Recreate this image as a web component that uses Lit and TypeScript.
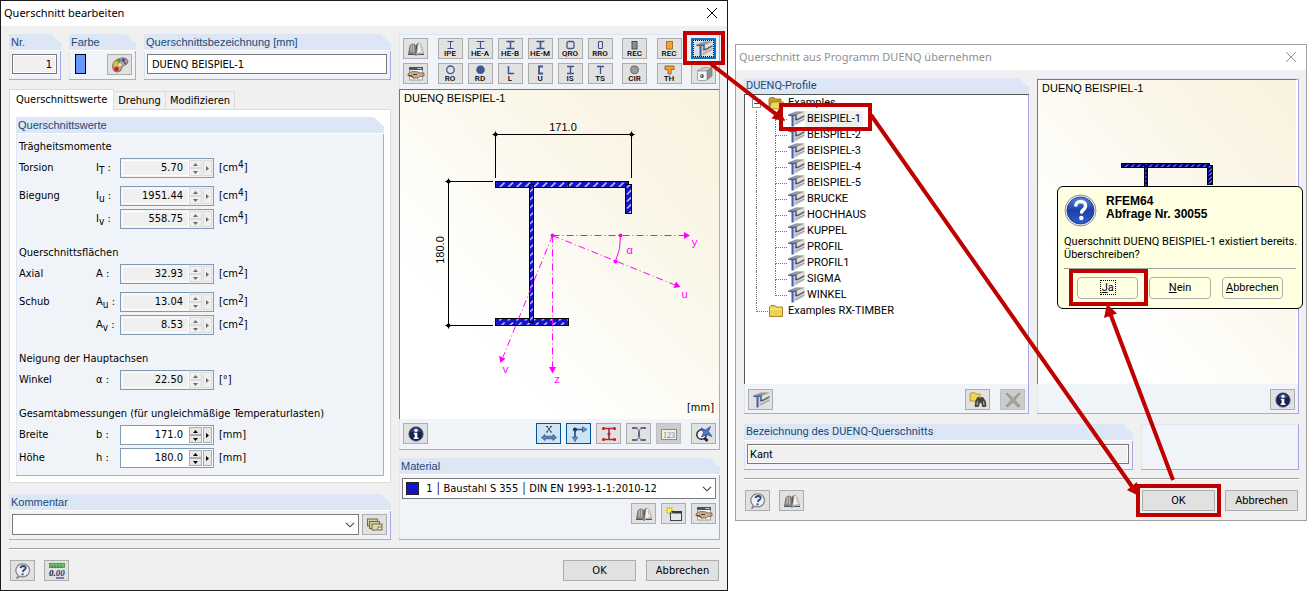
import { LitElement, html, svg, css, TemplateResult } from "lit";
import { customElement } from "lit/decorators.js";
import { classMap } from "lit/directives/class-map.js";

type Field = { id: string; label: string; symbol: TemplateResult; value: string; unit: TemplateResult; editable?: boolean; spaced?: boolean };
type Section = { title: string; fields: Field[] };

const cm4 = html`[cm<sup>4</sup>]`;
const cm2 = html`[cm<sup>2</sup>]`;
const mm = html`[mm]`;

const sections: Section[] = [
  {
    title: "Trägheitsmomente",
    fields: [
      { id: "it", label: "Torsion", symbol: html`I<sub>T</sub> :`, value: "5.70", unit: cm4 },
      { id: "iu", label: "Biegung", symbol: html`I<sub>u</sub> :`, value: "1951.44", unit: cm4, spaced: true },
      { id: "iv", label: "", symbol: html`I<sub>v</sub> :`, value: "558.75", unit: cm4 },
    ],
  },
  {
    title: "Querschnittsflächen",
    fields: [
      { id: "a", label: "Axial", symbol: html`A :`, value: "32.93", unit: cm2 },
      { id: "au", label: "Schub", symbol: html`A<sub>u</sub> :`, value: "13.04", unit: cm2, spaced: true },
      { id: "av", label: "", symbol: html`A<sub>v</sub> :`, value: "8.53", unit: cm2 },
    ],
  },
  {
    title: "Neigung der Hauptachsen",
    fields: [{ id: "alpha", label: "Winkel", symbol: html`α :`, value: "22.50", unit: html`[°]` }],
  },
  {
    title: "Gesamtabmessungen (für ungleichmäßige Temperaturlasten)",
    fields: [
      { id: "b", label: "Breite", symbol: html`b :`, value: "171.0", unit: mm, editable: true },
      { id: "h", label: "Höhe", symbol: html`h :`, value: "180.0", unit: mm, editable: true },
    ],
  },
];

const profiles = ["BEISPIEL-1", "BEISPIEL-2", "BEISPIEL-3", "BEISPIEL-4", "BEISPIEL-5", "BRUCKE", "HOCHHAUS", "KUPPEL", "PROFIL", "PROFIL1", "SIGMA", "WINKEL"];

const icon = (body: unknown, w = 18, h = 16) => html`<svg class="icon" width=${w} height=${h} viewBox="0 0 ${w} ${h}" aria-hidden="true">${body}</svg>`;

const icons = {
  close: icon(svg`<path d="M1 1L11 11M11 1L1 11" fill="none" stroke="currentColor"/>`, 12, 12),
  book: icon(svg`
    <path d="M1.500 12.500L3 4.500Q5 2 8 3.500L9 13.500Q5 11.500 1.500 12.500Z" fill="#8f8a84" stroke="#55514d" stroke-width=".6"/>
    <path d="M4.500 4L4 11M6.500 3.500L6.500 11.500" stroke="#bdb8b1" fill="none" stroke-width="1.200"/>
    <path d="M9 13.500L8.500 4.500L11 2L11.500 11Z" fill="#5b5753"/>
    <path d="M9.500 13L11 2.500Q13 2 14 3.500L16.500 12Q12.500 11 9.500 13Z" fill="#f7f5f0" stroke="#8b867f" stroke-width=".6"/>
    <path d="M13 4.500L14.500 10.500" stroke="#c9c4bc" fill="none"/>
    <path d="M1 13Q6 12 9 14Q12 12.200 17 12.800V14H10L9 15L8 14H1Z" fill="#4a5170"/>`),
  form: icon(svg`
    <rect x="2.500" y="1.500" width="13" height="12.500" fill="#f0f2f4" stroke="#9aa2aa"/>
    <rect x="2" y="1" width="14" height="3" fill="#4b5563"/>
    <path d="M10.500 2.500H14.500" stroke="#c3cad3"/>
    <path d="M1 8L3.500 6L7 5.500L11 6L13.500 7H17V10L13 10.500L11.500 12H6L5 10.500L1 9.500Z" fill="#d3ad8b" stroke="#5a4433" stroke-width=".7"/>
    <path d="M1.500 9.500L5 10L6.500 11.500M6 8.500H10" stroke="#3b2a1f" fill="none" stroke-width=".9"/>`),
  profile: icon(svg`
    <path d="M1 3.500L9 .5H17.500V9.500L6 15.500V7L1 4.500Z" fill="#cfcfcf"/>
    <path d="M1 3.500L9 .5H17.500L9.500 4Z" fill="#9a9a9a"/>
    <path d="M8 5L17 1.800V3.500L9.500 7.500Z" fill="#e2e2e2"/>
    <path d="M8 8.500H10.500L17.500 4.800" fill="none" stroke="#555" stroke-width="1.300"/>
    <path d="M8 12.800L17.500 8" fill="none" stroke="#9a9a9a" stroke-width=".9"/>
    <path d="M1.500 4.200H9V8" fill="none" stroke="#4560a8" stroke-width="1.600"/>
    <path d="M5.500 4V15.500" fill="none" stroke="#4560a8" stroke-width="2"/>`),
  box: icon(svg`
    <path d="M2 5L8 1.500H17L12 5Z" fill="#c9c9c9" stroke="#8a8a8a" stroke-width=".6"/>
    <path d="M12 5L17 1.500V10L12 14Z" fill="#8d8d8d" stroke="#777" stroke-width=".6"/>
    <rect x="2.500" y="5" width="9.500" height="9.500" rx="1.500" fill="#f6f6f6" stroke="#8a8a8a" stroke-width=".7"/>
    <circle cx="7" cy="10" r="1.900" fill="#555"/><circle cx="6.500" cy="9.500" r=".8" fill="#ddd"/>`),
  palette: icon(svg`
    <path d="M2 12Q0 5 7 2Q15 -1 17 4Q17.500 7 13 8.500Q10 10 10.500 12Q10 15 6 15Q3 15 2 12Z" fill="#b9a58a" stroke="#6d5c48" stroke-width=".8"/>
    <circle cx="4.500" cy="7" r="2" fill="#e8c516"/><circle cx="8" cy="3.800" r="1.800" fill="#2fa52f"/>
    <circle cx="12.500" cy="3.200" r="1.800" fill="#2b50d8"/><circle cx="5.500" cy="12" r="2.300" fill="#d42020"/>
    <circle cx="9" cy="8" r="1.400" fill="#f2ead9"/><circle cx="14" cy="6" r="1" fill="#7a3d9a"/>`),
  info: icon(svg`
    <circle cx="9" cy="8" r="7.200" fill="#16234f" stroke="#5c6584" stroke-width=".8"/>
    <path d="M4 5Q9 -1 14 5Q9 7 4 5Z" fill="#44568f"/>
    <circle cx="9" cy="4.300" r="1.600" fill="#fff"/>
    <path d="M6.800 6.800H10.300V11.500H11.500V13H6.600V11.500H7.700V8.200H6.800Z" fill="#fff"/>`),
  dims: icon(svg`
    <path d="M7 .5L11 6M11 .5L7 6M6 .5H8M10 .5H12M6 6H8M10 6H12" stroke="#222" fill="none" stroke-width=".8"/>
    <path d="M1.500 11.500L5 8.500V10.200H13V8.500L16.500 11.500L13 14.500V12.800H5V14.500Z" fill="#5a83bd" stroke="#28467c" stroke-width=".7"/>`),
  axes: icon(svg`
    <path d="M5 13V3.500H13" fill="none" stroke="#2f4f8f" stroke-width="1.700"/>
    <circle cx="5" cy="3.500" r="2.100" fill="#20345f"/>
    <path d="M12.500 .8L17 3.500L12.500 6.200ZM2.300 11L5 15.700L7.700 11Z" fill="#6a93cc" stroke="#28467c" stroke-width=".6"/>`),
  points: icon(svg`
    <path d="M9 2.500V13.500" stroke="#3a3f66" fill="none" stroke-width="1.500"/>
    <path d="M2 2.500H16M2 13.500H16" stroke="#c2202c" fill="none" stroke-width="1.300"/>
    <g fill="#d8141c"><circle cx="3.500" cy="2.500" r="1.500"/><circle cx="14.500" cy="2.500" r="1.500"/><circle cx="9" cy="8" r="1.600"/><circle cx="3.500" cy="13.500" r="1.500"/><circle cx="14.500" cy="13.500" r="1.500"/></g>`),
  beam: icon(svg`<path d="M2 2H7.500M10.500 2H16M2 14H7.500M10.500 14H16M9 4.500V11.500" stroke="#33406f" stroke-width="1.500" fill="none"/><path d="M7 3.500H11M7 12.500H11" stroke="#8a92b3"/>`),
  numbers: icon(svg`<rect x="1.500" y="3.500" width="15" height="10" fill="#efefe6" stroke="#8d8d86"/><text x="9" y="11.500" text-anchor="middle" font-family="Liberation Serif" font-size="8" fill="#777">123</text>`),
  zoom: icon(svg`
    <circle cx="6.500" cy="8.500" r="4.700" fill="#f2f4f6" stroke="#20252e" stroke-width="1.400"/>
    <path d="M9.500 12L12.500 15" stroke="#20252e" stroke-width="2.800"/>
    <path d="M6 2L10.500 4L15.500 .5L13.500 5.500L17 10.500L11.500 8.500L6.500 11L8.500 6.500Z" fill="#4b78cc" stroke="#24468e" stroke-width=".7"/>`),
  help: icon(svg`
    <path d="M9 .8A6.700 6.500 0 1 1 6 13.200L3 15.300L4 12A6.700 6.500 0 0 1 9 .8Z" fill="#eef0f4" stroke="#80858e" stroke-width="1.300"/>
    <path d="M6.500 5Q7 3 9.300 3Q12 3.200 11.600 5.200Q11.300 6.400 9.500 7.300L9 9" fill="none" stroke="#34477f" stroke-width="1.900"/>
    <circle cx="8.600" cy="11.300" r="1.100" fill="#34477f"/>`),
  units: icon(svg`
    <rect x="1.500" y=".5" width="15" height="4" fill="#6cc069" stroke="#3e8f45" stroke-width=".8"/>
    <path d="M4 2.500V4.500M7 2.500V4.500M10 2.500V4.500M13 2.500V4.500" stroke="#24662b"/>
    <text x="1" y="13" font-family="Liberation Serif" font-size="9" font-style="italic" font-weight="bold" fill="#111">0.<tspan fill="#24407e">00</tspan></text>
    <path d="M8 15H16" stroke="#24407e" stroke-width="1.200"/>`),
  cards: icon(svg`
    <rect x="1.500" y="2" width="10" height="7" fill="#d8d0a4" stroke="#6f6a4e"/>
    <rect x="3.500" y="4.500" width="10" height="7" fill="#d8d0a4" stroke="#6f6a4e"/>
    <rect x="6" y="7" width="10" height="6" fill="#e0d8ae" stroke="#6f6a4e"/>
    <path d="M12 13V10H16" fill="#fff" stroke="#6f6a4e"/>`),
  add: icon(svg`
    <rect x="5.500" y="5.500" width="11" height="9" fill="#e4e9ef" stroke="#3c4452"/>
    <rect x="5" y="5" width="12" height="2.500" fill="#323a4c"/>
    <path d="M4.500 .5V8.500M.5 4.500H8.500M1.700 1.700L7.300 7.300M7.300 1.700L1.700 7.300" stroke="#d9b400" stroke-width="1.200"/>
    <circle cx="4.500" cy="4.500" r="1.900" fill="#fff04a"/>`),
  search: icon(svg`
    <path d="M1 2L2 .8H6L7 2H11V9H1Z" fill="#f0d455" stroke="#a8861a" stroke-width=".8"/>
    <path d="M6 14.500L6.500 9.500L8.500 5.500H10.500L11.300 8.500L12 5.500H14L16.500 9.500L17 14.500H13.500L12.500 10.500H10.500L9.500 14.500Z" fill="#4a4845" stroke="#262524" stroke-width=".6"/>
    <path d="M8 13L8.500 9.500M15 13L14.500 9.500" stroke="#b8b3ac" stroke-width="1.100"/>`),
  remove: icon(svg`<path d="M2 1.500L4 1.500L9 6.500L15 1L16 1.500L10.800 8L16 14L14 15L9 9.800L3.500 15L2 14L7.300 8Z" fill="#a3a79f" stroke="#80847c" stroke-width=".7"/>`),
  folderOpen: icon(svg`<path d="M1 3L2.500 1.500H6L7 3H13V12.500H1Z" fill="#c59d24" stroke="#8a6c12" stroke-width=".8"/><path d="M3.500 6H15.500L13 13H1.200Z" fill="#f0d75e" stroke="#97781a" stroke-width=".8"/>`, 16, 14),
  folder: icon(svg`<path d="M1.500 3L3 1.500H7L8 3H14.500V12.500H1.500Z" fill="#eed251" stroke="#9a7c1c" stroke-width=".9"/><path d="M2 5H14" stroke="#fbf0a8"/>`, 16, 14),
  chevron: html`<svg class="chevron" width="10" height="6" viewBox="0 0 10 6" aria-hidden="true"><path d="M1 .8L5 4.800L9 .8" fill="none" stroke="#444" stroke-width="1.100"/></svg>`,
};

const blue = "#3f5592";
const iShape = (half: number, weight: number) => svg`<path d="M${11.5 - half} 2.500H${11.5 + half}M${11.5 - half} 9.500H${11.5 + half}M11.500 2.500V9.500" fill="none" stroke=${blue} stroke-width=${weight}/>`;
const shapes: Record<string, unknown> = {
  IPE: iShape(3, 1),
  "HE-A": iShape(4, 1.2),
  "HE-B": iShape(4, 1.5),
  "HE-M": iShape(4, 1.7),
  QRO: svg`<rect x="8" y="2.500" width="7" height="7" rx="1.500" fill="none" stroke=${blue} stroke-width="1.300"/>`,
  RRO: svg`<rect x="9.500" y="2.500" width="4" height="7" rx=".8" fill="none" stroke=${blue} stroke-width="1.100"/>`,
  REC: svg`<rect x="9" y="2.500" width="5" height="7.500" fill="#8f8f8f" stroke="#444e66"/>`,
  "REC ": svg`<rect x="8.500" y="2.500" width="6" height="7.500" fill="#f9a12e" stroke="#a8742c"/>`,
  RO: svg`<circle cx="11.500" cy="5.800" r="3.800" fill="none" stroke=${blue} stroke-width="1.300"/>`,
  RD: svg`<circle cx="11.500" cy="5.800" r="4.300" fill=${blue}/>`,
  L: svg`<path d="M9.500 2V9.500H15" fill="none" stroke=${blue} stroke-width="1.500"/>`,
  U: svg`<path d="M14 2.500H10V9.500H14" fill="none" stroke=${blue} stroke-width="1.800"/>`,
  IS: iShape(3.5, 1.5),
  TS: svg`<path d="M8 2.500H15M11.500 2.500V10" fill="none" stroke=${blue} stroke-width="1.300"/>`,
  CIR: svg`<circle cx="11.500" cy="5.800" r="4" fill="#9b9b9b" stroke="#6a6a6a"/>`,
  TH: svg`<path d="M7 2H16V5.500H13V10H10V5.500H7Z" fill="#f9a12e" stroke="#8a5f22" stroke-width=".9"/>`,
};

@customElement("app-root")
export class AppRoot extends LitElement {
  static styles = css`
    :host {
      display: block;
      background: #fff;
      color: #000;
      font: 11px/16px "DejaVu Sans Condensed", "DejaVu Sans", sans-serif;
      --line: #a6a6ee;
      --head: #dce6f5;
      --fill: #f0f4f9;
    }
    * { box-sizing: border-box; }
    button, input, select { font: inherit; color: inherit; margin: 0; padding: 0; border-radius: 0; }
    button { appearance: none; }
    svg { display: block; flex: none; }
    sub, sup { font-size: 10px; line-height: 0; }
    sub { vertical-align: -3px; }
    sup { vertical-align: 3px; }

    .desktop {
      position: relative;
      display: grid;
      grid-template-columns: minmax(0, 728fr) minmax(0, 572fr);
      column-gap: 7px;
      padding-right: 7px;
      align-items: start;
    }
    .window { background: #f0f0f0; border: 1px solid #1b1b1b; min-width: 0; }
    .window.second { position: relative; margin-top: 44px; border-color: #a0a0a0; font-family: Roboto, sans-serif; }
    .titlebar {
      display: flex; align-items: center; justify-content: space-between;
      height: 25px; padding: 0 9px 2px 3px; background: #fff;
      font-family: "Noto Sans", sans-serif;
    }
    .titlebar h1 { margin: 0; font: inherit; }
    .titlebar button { border: 0; background: none; }
    .second .titlebar { color: #8f8f8f; }
    .content { padding: 8px 7px 9px 8px; }
    .columns { display: grid; gap: 8px; }
    .main-cols { grid-template-columns: minmax(0, 382fr) minmax(0, 321fr); }
    .duenq-cols { grid-template-columns: minmax(0, 285fr) minmax(0, 262fr); }
    .name-cols { grid-template-columns: minmax(0, 390fr) minmax(0, 158fr); margin-top: 10px; }
    .left { display: flex; flex-direction: column; }
    .right { display: grid; grid-template-rows: 1fr auto; gap: 8px; }
    .top { display: grid; grid-template-columns: 52px 67px minmax(0, 1fr); gap: 8px; }

    .group {
      display: flex; flex-direction: column; min-width: 0; min-height: 46px;
      background: var(--fill);
      border: solid var(--line); border-width: 0 1px 1px 0;
      box-shadow: inset 1px 0 var(--head);
    }
    .group.cut { clip-path: polygon(0 0, calc(100% - 10px) 0, 100% 10px, 100% 100%, 0 100%); }
    .group.plain { border-top: 1px solid var(--head); }
    .group h2 {
      margin: 0 -1px 0 0; height: 17px; padding-left: 2px; white-space: nowrap;
      font: 11px/16px "Liberation Sans", Arial, sans-serif; color: #1b4a75;
      background: var(--head); border-bottom: 1px solid #fff;
    }
    .second .group h2 { font-family: Roboto, sans-serif; }
    .row { display: flex; gap: 3px; padding: 3px 3px 4px; align-items: flex-start; }

    .text { width: 100%; min-width: 0; height: 20px; padding: 0 4px; border: 1px solid #7a7a7a; background: #fff; }
    .text[readonly] { background: #f0f0f0; box-shadow: inset 0 0 0 1px #fff; }
    .second .text[readonly] { padding: 0 2px; }
    .text.number { text-align: right; }
    .swatch { display: block; flex: none; width: 11px; height: 20px; border: 1px solid #000; background: #6699ff; }
    .color-row { justify-content: space-between; padding-left: 6px; }

    .btn { display: flex; align-items: center; justify-content: center; height: 21px; border: 1px solid #adadad; background: #e1e1e1; }
    .btn.square { width: 25px; flex: none; }
    .btn.wide { width: 73px; margin-left: 1px; }
    .btn.on { background: #cce4f7; border-color: #005499; }
    .btn:disabled { background: #ccc; border-color: #bfbfbf; }
    .btn.focus { border: 2px solid #0078d7; outline: 1px dotted #000; outline-offset: -3px; }
    .btn.shape { flex-direction: column; justify-content: flex-start; }
    .btn.shape span { font: 500 8px/8px Roboto, sans-serif; color: #000; }

    .tabs { display: flex; align-items: flex-end; margin-top: 9px; height: 20px; }
    .tabs button { height: 18px; padding: 0 4px; background: #f0f0f0; border: 1px solid #dcdcdc; border-width: 1px 1px 0 0; white-space: nowrap; }
    .tabs button[aria-selected="true"] { height: 21px; margin-bottom: -1px; padding: 0 6px; background: #fff; border-left-width: 1px; position: relative; }
    .panel { flex: 1; display: grid; padding: 7px 6px 6px; background: #fff; border: 1px solid #dcdcdc; }
    .fields { display: flex; flex-direction: column; gap: 16px; padding: 5px 2px 7px 3px; }
    .fields section { display: flex; flex-direction: column; gap: 3px; }
    .fields h3 { margin: 0; font: inherit; white-space: nowrap; }
    .field { display: grid; grid-template-columns: 101px 94px 1fr; align-items: center; }
    .field.spaced { margin-top: 5px; }
    .field label { display: grid; grid-template-columns: 77px 24px; white-space: nowrap; }
    .field .unit { padding-left: 5px; white-space: nowrap; }
    .spin { display: flex; height: 20px; padding: 1px; background: #f0f0f0; border: 1px solid #7f9db9; color: #000; }
    .spin input { flex: 1; min-width: 0; padding: 0 5px; border: 1px solid #fff; background: transparent; text-align: right; }
    .spin .steps { display: grid; width: 13px; margin-right: 1px; }
    .spin button { display: grid; place-items: center; min-height: 0; border: 1px solid #dcdcdc; background: #f0f0f0; color: #6d6d6d; }
    .spin .side { width: 9px; }
    .spin.editable { background: #fff; }
    .spin.editable button { border-color: #adadad; background: #e8e8e8; color: #000; }
    .comment { margin-top: 11px; }

    .combo { display: grid; flex: 1; min-width: 0; height: 21px; align-items: center; background: #fff; border: 1px solid #7a7a7a; }
    .combo > * { grid-row: 1; }
    .combo select { grid-column: 1 / 3; height: 19px; width: 100%; appearance: none; border: 0; background: transparent; }
    .combo .chevron { grid-column: 2; justify-self: end; margin-right: 3px; pointer-events: none; }
    .combo.material { flex: none; grid-template-columns: 20px minmax(0, 1fr); }
    .combo.material select { grid-column: 2; }
    .chip { width: 13px; height: 13px; margin-left: 3px; background: #1414cd; border: 1px solid #222; }
    .material-body { display: flex; flex-direction: column; gap: 4px; padding: 3px 3px 15px; }
    .actions { display: flex; justify-content: flex-end; gap: 5px; }

    .toolbox { display: flex; flex-direction: column; gap: 4px; padding: 3px 3px 5px 4px; }
    .tools { display: flex; justify-content: space-between; }
    .tools div { display: flex; gap: 5px; }
    .canvas {
      flex: 1; display: flex; flex-direction: column; min-height: 0;
      border: solid #777; border-width: 1px 0 0 1px;
      background: linear-gradient(to top right, #fff 25%, #faf7e9 68%, #fbf3e3 84%, #f7f4de);
      font: 11px/16px "Liberation Sans", Arial, sans-serif;
    }
    .second .canvas { border-right: 2px solid #fff; }
    .canvas p { margin: 0; padding-left: 4px; }
    .canvas .unit { align-self: flex-end; padding: 0 5px 3px 0; font-family: "DejaVu Sans Condensed", sans-serif; }
    .canvas svg { width: 100%; flex: 1; min-height: 0; }
    .viewbar { display: flex; gap: 5px; padding: 4px 3px 5px 4px; }
    .second .viewbar { padding: 5px 3px 3px 4px; }
    .viewbar .push { margin-right: auto; }
    .viewbar .gap { margin-left: 5px; }

    .rule { height: 2px; margin-top: 8px; background: #a0a0a0; border-bottom: 1px solid #fff; }
    .footer { display: flex; gap: 9px; margin: 10px 1px 0; }
    .footer .push { margin-right: auto; }

    .tree { flex: 1; margin: 0; padding: 0 0 0 7px; list-style: none; background: #fff; border: solid #555; border-width: 0 0 0 1px; }
    .profiles h2 { border-bottom-color: #555; }
    .tree ul { margin: 0; padding: 0; list-style: none; }
    .node { display: flex; align-items: center; height: 16px; }
    .node .name { padding: 0 2px; margin-left: 2px; }
    .node .trunk ~ .name { margin-left: 0; }
    .node.selected .name { background: #f0f0f0; }
    .toggle { display: grid; place-items: center; width: 9px; height: 9px; margin-right: 7px; border: 1px solid #919191; background: #fff; }
    .trunk { width: 19px; height: 16px; margin-left: 4px; border-left: 1px dotted #777; }
    .branch { display: flex; flex-direction: column; width: 12px; height: 16px; }
    .branch::before { content: ""; height: 9px; border: dotted #777; border-width: 0 0 1px 1px; }
    .branch::after { content: ""; height: 7px; border-left: 1px dotted #777; }
    .branch.end::after { border: 0; }
    .branch.root { margin-left: 4px; }

    .query {
      position: absolute; top: 141px; right: 3px; width: 246px; padding: 7px 6px 9px;
      background: #ffffe1; border: 1px solid #000; border-radius: 6px;
    }
    .query header { display: flex; gap: 9px; align-items: center; font: bold 12px/13px "Liberation Sans", Arial, sans-serif; }
    .query p { margin: 8px 0 7px; line-height: 13px; white-space: nowrap; }
    .query header p { margin: 0 0 6px; line-height: 13px; }
    .query .rule { margin: 0; }
    .answers { display: flex; gap: 11px; padding: 7px 13px 0; }
    .answers button { flex: 1; height: 22px; border: 1px solid #adadad; border-radius: 4px; background: transparent; }
    .answers span { display: inline-block; padding: 0 1px; line-height: 13px; }
    .answers .default span { outline: 1px dotted #000; }

    .notes { position: absolute; inset: 0; width: 100%; height: 100%; pointer-events: none; }
  `;

  private square(label: string, glyph: unknown, cls = "", disabled = false) {
    return html`<button class="btn square ${cls}" aria-label=${label} ?disabled=${disabled}>${glyph}</button>`;
  }

  private shape(name: string) {
    return html`<button class="btn square shape">
      <svg width="23" height="11" viewBox="0 0 23 11" aria-hidden="true">${shapes[name]}</svg><span>${name.trim()}</span>
    </button>`;
  }

  private field(f: Field) {
    return html`<div class=${classMap({ field: true, spaced: !!f.spaced })}>
      <label for=${f.id}><span>${f.label}</span><span>${f.symbol}</span></label>
      <div class=${classMap({ spin: true, editable: !!f.editable })}>
        <input id=${f.id} .value=${f.value} ?readonly=${!f.editable} />
        <div class="steps">
          <button aria-label="Mehr"><svg width="5" height="3" viewBox="0 0 5 3"><path d="M0 3L2.500 0L5 3Z" fill="currentColor"/></svg></button>
          <button aria-label="Weniger"><svg width="5" height="3" viewBox="0 0 5 3"><path d="M0 0L2.500 3L5 0Z" fill="currentColor"/></svg></button>
        </div>
        <button class="side" aria-label="Auswahl"><svg width="3" height="5" viewBox="0 0 3 5"><path d="M0 0L3 2.500L0 5Z" fill="currentColor"/></svg></button>
      </div>
      <span class="unit">${f.unit}</span>
    </div>`;
  }

  private drawing() {
    const tick = (x: number, y: number) => svg`<path d="M${x - 3} ${y}H${x + 3}M${x} ${y - 3}V${y + 3}" stroke="#000"/><circle cx=${x} cy=${y} r="2" fill="#000"/>`;
    return html`<svg viewBox="400 106 319 294" role="img" aria-label="Querschnitt mit Bemaßung">
      <defs>
        <pattern id="hatch" width="8.500" height="7" patternUnits="userSpaceOnUse" x="498" y="181">
          <rect width="8.500" height="7" fill="#1414cd"/><path d="M1.500 6.500L6.500 1.500" stroke="#dcdcfa" stroke-width="1.300"/>
        </pattern>
        <pattern id="hatchWeb" width="4" height="8" patternUnits="userSpaceOnUse" x="529.500" y="186">
          <rect width="4" height="8" fill="#1414cd"/><path d="M.5 6L4 2.500" stroke="#dcdcfa" stroke-width="1.200"/>
        </pattern>
      </defs>
      <path d="M495.500 134.500H631.500M495.500 134.500V178M631.500 134.500V178M448.500 181.500V325.500M448.500 181.500H493M448.500 325.500H493" fill="none" stroke="#000"/>
      ${tick(495.5, 134.5)}${tick(631.5, 134.5)}${tick(448.5, 181.5)}${tick(448.5, 325.5)}
      <text x="563" y="131" text-anchor="middle" font-size="11">171.0</text>
      <text transform="translate(444 250) rotate(-90)" text-anchor="middle" font-size="11">180.0</text>
      <g stroke="#000">
        <rect x="495.500" y="181.500" width="133" height="6" fill="url(#hatch)"/>
        <path d="M568.500 181.500V187.500"/>
        <rect x="495.500" y="318.500" width="73" height="7" fill="url(#hatch)"/>
        <rect x="529.500" y="184.500" width="4" height="138" fill="url(#hatchWeb)"/>
        <rect x="625.500" y="184.500" width="6" height="29" fill="url(#hatch)"/>
      </g>
      <g stroke="#f0f" fill="none">
        <path d="M552.500 235.500H684M552.500 235.500V367M552.500 235.500L675 285M552.500 235.500L503 357" stroke-dasharray="7 3 1 3"/>
        <path d="M620.500 235.500Q621 249 615.500 261.500"/>
      </g>
      <g fill="#f0f">
        <circle cx="552.500" cy="235.500" r="2"/><circle cx="620.500" cy="235.500" r="2"/><circle cx="615.500" cy="261.500" r="2"/>
        <path d="M684 232L690 235.500L684 239ZM549 367L552.500 373.500L556 367ZM680.500 287L673.500 288L676 281.500ZM500.500 363L499 356L505.500 358.500Z"/>
        <g font-family="Liberation Mono" font-size="11" text-anchor="middle">
          <text x="694.500" y="246">y</text><text x="629.500" y="254">α</text><text x="684.500" y="298">u</text><text x="505.500" y="373">v</text><text x="557" y="383">z</text>
        </g>
      </g>
    </svg>`;
  }

  private preview() {
    return html`<svg viewBox="1038 96 258 288" role="img" aria-label="Vorschau des Profils">
      <defs>
        <pattern id="mini" width="6" height="4" patternUnits="userSpaceOnUse" x="1124" y="164">
          <rect width="6" height="4" fill="#000082"/><path d="M1 3.500L4 .5" stroke="#c9c9f7"/>
        </pattern>
      </defs>
      <g fill="url(#mini)" stroke="#000">
        <rect x="1121.500" y="163.500" width="88" height="4"/>
        <rect x="1121.500" y="254.500" width="48" height="5"/>
        <rect x="1144.500" y="165.500" width="3" height="91"/>
        <rect x="1207.500" y="165.500" width="5" height="19"/>
      </g>
    </svg>`;
  }

  private editor() {
    return html`<main class="window">
      <div class="titlebar"><h1>Querschnitt bearbeiten</h1><button aria-label="Schließen">${icons.close}</button></div>
      <div class="content">
        <div class="columns main-cols">
          <div class="left">
            <div class="top">
              <div class="group cut"><h2><label for="nr">Nr.</label></h2><div class="row"><input id="nr" class="text number" readonly value="1" /></div></div>
              <div class="group cut"><h2>Farbe</h2><div class="row color-row"><span class="swatch"></span>${this.square("Farbe wählen", icons.palette)}</div></div>
              <div class="group cut"><h2><label for="name">Querschnittsbezeichnung [mm]</label></h2><div class="row"><input id="name" class="text" value="DUENQ BEISPIEL-1" /></div></div>
            </div>
            <div class="tabs" role="tablist">
              <button role="tab" aria-selected="true">Querschnittswerte</button>
              <button role="tab" aria-selected="false">Drehung</button>
              <button role="tab" aria-selected="false">Modifizieren</button>
            </div>
            <div class="panel" role="tabpanel">
              <div class="group cut">
                <h2>Querschnittswerte</h2>
                <div class="fields">${sections.map((s) => html`<section><h3>${s.title}</h3>${s.fields.map((f) => this.field(f))}</section>`)}</div>
              </div>
            </div>
            <div class="group cut comment">
              <h2><label for="comment">Kommentar</label></h2>
              <div class="row"><div class="combo"><select id="comment"><option></option></select>${icons.chevron}</div>${this.square("Kommentare", icons.cards)}</div>
            </div>
          </div>
          <div class="right">
            <div class="group plain">
              <div class="toolbox">
                <div class="tools">
                  ${this.square("Bibliothek", icons.book)}
                  <div>${["IPE", "HE-A", "HE-B", "HE-M", "QRO", "RRO"].map((n) => this.shape(n))}</div>
                  ${this.shape("REC")}${this.shape("REC ")}${this.square("DUENQ", icons.profile, "focus")}
                </div>
                <div class="tools">
                  ${this.square("Bearbeiten", icons.form)}
                  <div>${["RO", "RD", "L", "U", "IS", "TS"].map((n) => this.shape(n))}</div>
                  ${this.shape("CIR")}${this.shape("TH")}${this.square("Hohlprofil", icons.box)}
                </div>
              </div>
              <div class="canvas"><p>DUENQ BEISPIEL-1</p>${this.drawing()}<p class="unit">[mm]</p></div>
              <div class="viewbar">
                ${this.square("Info", icons.info, "push")}${this.square("Bemaßung", icons.dims, "on")}${this.square("Achsen", icons.axes, "on")}
                ${this.square("Spannungspunkte", icons.points)}${this.square("Umriss", icons.beam)}${this.square("Nummerierung", icons.numbers, "", true)}
                ${this.square("Zoom zurücksetzen", icons.zoom, "gap")}
              </div>
            </div>
            <div class="group cut">
              <h2><label for="material">Material</label></h2>
              <div class="material-body">
                <div class="combo material">
                  <span class="chip"></span>
                  <select id="material"><option>&nbsp;1&nbsp;│&thinsp;Baustahl S 355&nbsp;│&thinsp;DIN EN 1993-1-1:2010-12</option></select>
                  ${icons.chevron}
                </div>
                <div class="actions">${this.square("Bibliothek", icons.book)}${this.square("Neu", icons.add)}${this.square("Bearbeiten", icons.form)}</div>
              </div>
            </div>
          </div>
        </div>
        <div class="rule"></div>
        <div class="footer">${this.square("Hilfe", icons.help)}${this.square("Einheiten", icons.units, "push")}<button class="btn wide">OK</button><button class="btn wide">Abbrechen</button></div>
      </div>
    </main>`;
  }

  private importer() {
    return html`<section class="window second">
      <div class="titlebar"><h1>Querschnitt aus Programm DUENQ übernehmen</h1><button aria-label="Schließen">${icons.close}</button></div>
      <div class="content">
        <div class="columns duenq-cols">
          <div class="group cut profiles">
            <h2>DUENQ-Profile</h2>
            <ul class="tree" role="tree">
              <li role="treeitem" aria-expanded="true">
                <div class="node"><span class="toggle"><svg width="5" height="1" viewBox="0 0 5 1"><path d="M0 .5H5" stroke="#3b4a80"/></svg></span>${icons.folderOpen}<span class="name">Examples</span></div>
                <ul role="group">
                  ${profiles.map((name, i) => html`<li role="treeitem" aria-selected=${i === 0} class=${classMap({ node: true, selected: i === 0 })}>
                    <span class="trunk"></span><span class=${classMap({ branch: true, end: i === profiles.length - 1 })}></span>${icons.profile}<span class="name">${name}</span>
                  </li>`)}
                </ul>
              </li>
              <li role="treeitem" class="node"><span class="branch root end"></span>${icons.folder}<span class="name">Examples RX-TIMBER</span></li>
            </ul>
            <div class="viewbar">${this.square("Profil", icons.profile, "push")}${this.square("Suchen", icons.search)}${this.square("Löschen", icons.remove, "gap", true)}</div>
          </div>
          <div class="group plain">
            <div class="canvas"><p>DUENQ BEISPIEL-1</p>${this.preview()}</div>
            <div class="viewbar"><span class="push"></span>${this.square("Info", icons.info)}</div>
          </div>
        </div>
        <div class="columns name-cols">
          <div class="group cut"><h2><label for="duenq">Bezeichnung des DUENQ-Querschnitts</label></h2><div class="row"><input id="duenq" class="text" readonly value="Kant" /></div></div>
          <div class="group plain"></div>
        </div>
        <div class="rule"></div>
        <div class="footer">${this.square("Hilfe", icons.help)}${this.square("Bibliothek", icons.book, "push")}<button class="btn wide">OK</button><button class="btn wide">Abbrechen</button></div>
      </div>
      ${this.query()}
    </section>`;
  }

  private query() {
    return html`<div class="query" role="alertdialog" aria-label="RFEM64">
      <header>
        <svg width="33" height="33" viewBox="0 0 33 33" aria-hidden="true">
          <defs><linearGradient id="ball" x1="0" y1="0" x2="0" y2="1"><stop offset="0" stop-color="#5b86d8"/><stop offset=".5" stop-color="#1c3fa8"/><stop offset="1" stop-color="#2a5fd0"/></linearGradient></defs>
          <circle cx="16.500" cy="16.500" r="15.500" fill="#e6e9ef" stroke="#8a8f98"/>
          <circle cx="16.500" cy="16.500" r="13.500" fill="url(#ball)" stroke="#1b2f70" stroke-width=".8"/>
          <path d="M11.500 12.500Q12 7.500 17 7.500Q22 8 21.500 12.500Q21 15 18.500 16.500Q17.500 17.500 17.500 19.500" fill="none" stroke="#fff" stroke-width="3.400"/>
          <circle cx="17.300" cy="24" r="2.200" fill="#fff"/>
        </svg>
        <p>RFEM64<br />Abfrage Nr. 30055</p>
      </header>
      <p>Querschnitt DUENQ BEISPIEL-1 existiert bereits.<br />Überschreiben?</p>
      <div class="rule"></div>
      <div class="answers">
        <button class="default"><span><u>J</u>a</span></button><button><span><u>N</u>ein</span></button><button><span><u>A</u>bbrechen</span></button>
      </div>
    </div>`;
  }

  render() {
    return html`<div class="desktop">
      ${this.editor()}${this.importer()}
      <svg class="notes" viewBox="0 0 1314 591" preserveAspectRatio="none" aria-hidden="true">
        <g fill="none" stroke="#c00000" stroke-width="4">
          <rect x="685" y="33" width="38" height="30"/>
          <rect x="781" y="105" width="89" height="24"/>
          <rect x="1138" y="486" width="81" height="29"/>
          <rect x="1071" y="271" width="75" height="33"/>
          <path d="M711 64L777 115M871 115L1133 488M1173 480L1110 313"/>
        </g>
        <path d="M785 121L771.500 118.500L779.500 108.500ZM1139 496L1127 490L1137 482ZM1107 304L1117 313.500L1104 318Z" fill="#c00000"/>
      </svg>
    </div>`;
  }
}
